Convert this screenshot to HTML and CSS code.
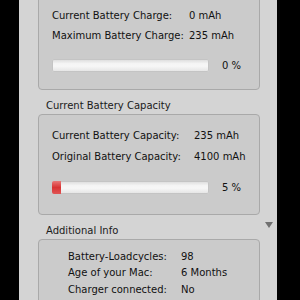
FILE: index.html
```html
<!DOCTYPE html>
<html lang="en">
<head>
    <meta charset="UTF-8">
    <title>Battery Info</title>
    <link rel="stylesheet" href="styles.css">
</head>
<body>

<div class="window">
    <div class="box box-top">
        <div class="rows rows-charge">
            <span>Current Battery Charge:</span><span class="val">0 mAh</span>
            <span>Maximum Battery Charge:</span><span class="val">235 mAh</span>
        </div>
        <div class="meter">
            <div class="bar"><div class="fill" style="width: 0%"></div></div>
            <span class="pct">0 %</span>
        </div>
    </div>

    <div class="section-title">Current Battery Capacity</div>
    <div class="box box-capacity">
        <div class="rows rows-capacity">
            <span>Current Battery Capacity:</span><span class="val">235 mAh</span>
            <span>Original Battery Capacity:</span><span class="val">4100 mAh</span>
        </div>
        <div class="meter">
            <div class="bar"><div class="fill" style="width: 6%"></div></div>
            <span class="pct">5 %</span>
        </div>
    </div>

    <div class="section-title with-toggle">
        Additional Info
        <span class="toggle"></span>
    </div>
    <div class="box box-info">
        <div class="rows rows-info">
            <span>Battery-Loadcycles:</span><span class="val">98</span>
            <span>Age of your Mac:</span><span class="val">6 Months</span>
            <span>Charger connected:</span><span class="val">No</span>
        </div>
    </div>
</div>

</body>
</html>
```

FILE: styles.css
```css
body {
    margin: 0;
    background: #000;
    font-family: "DejaVu Sans", Verdana, sans-serif;
    font-size: 10px;
    color: #111;
    height: 300px;
    overflow: hidden;
}
.window {
    margin-left: 19px;
    width: 258px;
    height: 300px;
    background: #d4d4d4;
    padding: 0 17px 0 19px;
    box-sizing: border-box;
    overflow: hidden;
}
.box {
    background: #cbcbcb;
    border: 1px solid #a9a9a9;
    border-radius: 4px;
    padding: 0 0 0 13px;
}
.box-top {
    margin-top: -6px;
    padding-top: 10px;
    padding-bottom: 17px;
}
.box-capacity {
    padding-top: 10px;
    padding-bottom: 20px;
}
.box-info {
    padding-top: 8px;
    padding-left: 29px;
    height: 80px;
}
.rows {
    display: grid;
    align-items: center;
}
.rows-charge {
    grid-template-columns: 137px auto;
    grid-auto-rows: 20px;
}
.rows-capacity {
    grid-template-columns: 142px auto;
    grid-auto-rows: 21px;
}
.rows-info {
    grid-template-columns: 113px auto;
    grid-auto-rows: 16.5px;
}
.meter {
    display: flex;
    align-items: center;
    margin-top: 14px;
}
.bar {
    width: 157px;
    height: 13px;
    border-radius: 2px;
    background: linear-gradient(#d9d9d9, #f4f4f4 35%, #f7f7f7 55%, #e2e2e2);
    box-shadow: inset 0 0 0 1px #c4c4c4;
    overflow: hidden;
}
.fill {
    height: 100%;
    background: linear-gradient(#e87777, #d83434 50%, #e05555);
}
.pct {
    margin-left: 13px;
}
.section-title {
    position: relative;
    color: #1a1a1a;
    margin: 9px 0 1px 8px;
    height: 14px;
    line-height: 14px;
}
.toggle {
    position: absolute;
    right: -13px;
    top: -2px;
    width: 0;
    height: 0;
    border-left: 4px solid transparent;
    border-right: 4px solid transparent;
    border-top: 6px solid #707070;
}
```
